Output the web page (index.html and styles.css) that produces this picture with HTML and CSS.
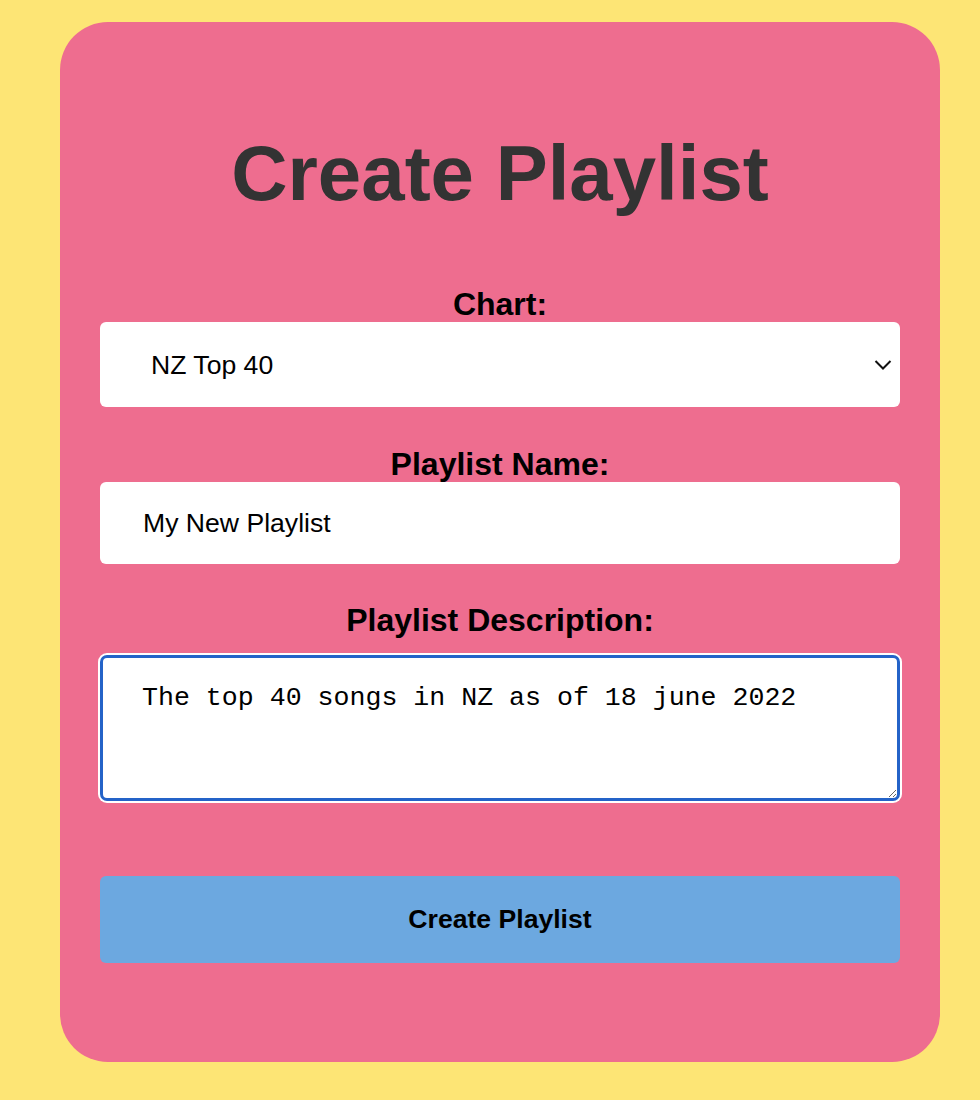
FILE: index.html
```html
<!DOCTYPE html>
<html>
<head>
<meta charset="utf-8">
<link rel="stylesheet" href="styles.css">
</head>
<body>
<div class="card">
  <h1 class="title">Create Playlist</h1>
  <form class="form">
    <label class="label" for="chart">Chart:</label>
    <div class="select-wrap">
      <select id="chart" class="select">
        <option>NZ Top 40</option>
      </select>
      <svg class="chev" width="18" height="12" viewBox="0 0 18 12"><path d="M1.5 2 L9 9.5 L16.5 2" fill="none" stroke="#111" stroke-width="2"/></svg>
    </div>
    <label class="label" for="name">Playlist Name:</label>
    <input id="name" class="input" type="text" value="My New Playlist">
    <label class="label" for="desc">Playlist Description:</label>
    <textarea id="desc" class="textarea">The top 40 songs in NZ as of 18 june 2022</textarea>
    <button type="button" class="button">Create Playlist</button>
  </form>
</div>
</body>
</html>
```
FILE: styles.css
```css
html, body {
  margin: 0;
  padding: 0;
  background: #fde575;
}
body {
  padding: 22px 40px 38px 60px;
  font-family: "Liberation Sans", Arial, sans-serif;
}
.card {
  width: 880px;
  height: 1040px;
  box-sizing: border-box;
  background: #ee6d8f;
  border-radius: 48px;
  padding: 0 40px;
  display: flex;
  flex-direction: column;
}
.title {
  margin: 106px 0 0;
  font-size: 78px;
  line-height: 91px;
  font-weight: 700;
  color: #333;
  text-align: center;
}
.form {
  display: flex;
  flex-direction: column;
  margin-top: 67px;
}
.label {
  display: block;
  text-align: center;
  font-size: 32px;
  line-height: 36px;
  font-weight: 700;
  color: #000;
}
.select-wrap {
  position: relative;
  height: 85px;
  margin-bottom: 39px;
}
.select {
  appearance: none;
  -webkit-appearance: none;
  width: 100%;
  height: 85px;
  border: none;
  border-radius: 6px;
  background: #fff;
  font-family: "Liberation Sans", Arial, sans-serif;
  font-size: 26.6px;
  color: #000;
  padding: 0 0 0 51px;
  margin: 0;
  outline: none;
}
.chev {
  position: absolute;
  right: 8px;
  top: 37px;
}
.input {
  height: 82px;
  box-sizing: border-box;
  border: none;
  border-radius: 6px;
  background: #fff;
  font-family: "Liberation Sans", Arial, sans-serif;
  font-size: 26.6px;
  color: #000;
  padding: 0 0 0 43px;
  margin: 0 0 38px;
  outline: none;
}
.textarea {
  height: 146px;
  box-sizing: border-box;
  border: 3px solid #2463c8;
  border-radius: 7px;
  box-shadow: 0 0 0 2px #fff;
  background: #fff;
  font-family: "Liberation Mono", "Courier New", monospace;
  font-size: 26.6px;
  line-height: normal;
  color: #000;
  padding: 25px 37px 25px 39px;
  margin: 17px 0 0;
  outline: none;
  resize: vertical;
}
.button {
  height: 87px;
  border: none;
  border-radius: 6px;
  background: #6ca8e0;
  font-family: "Liberation Sans", Arial, sans-serif;
  font-size: 26.6px;
  font-weight: 700;
  color: #000;
  margin-top: 75px;
  cursor: pointer;
}
```
